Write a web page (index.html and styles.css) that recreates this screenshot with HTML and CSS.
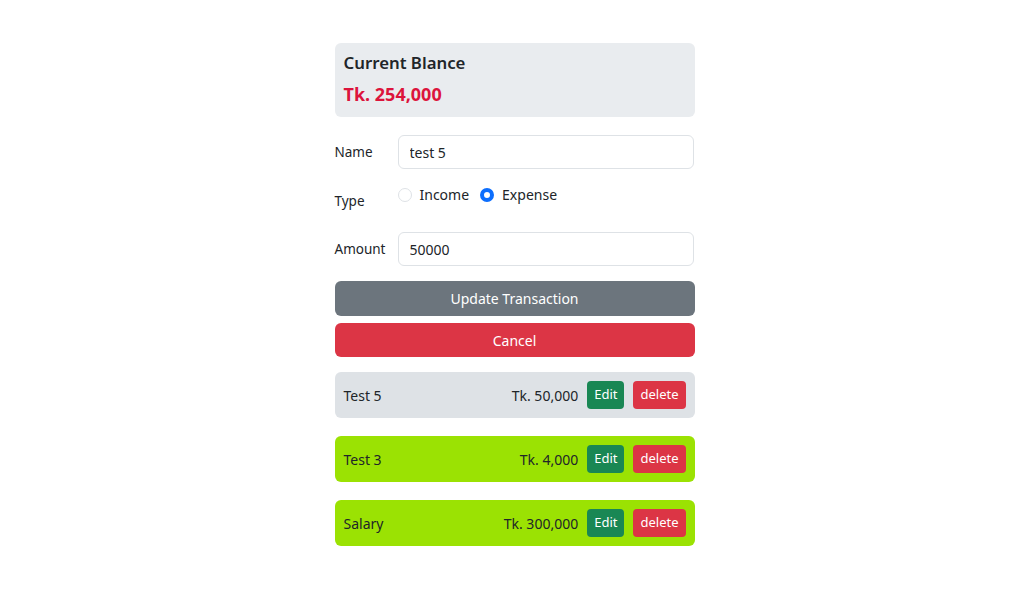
FILE: index.html
```html
<!DOCTYPE html>
<html>
<head>
<meta charset="utf-8">
<link rel="stylesheet" href="styles.css">
</head>
<body>
<main class="app">
  <section class="balance">
    <h2 class="balance-title">Current Blance</h2>
    <div class="balance-amount">Tk. 254,000</div>
  </section>

  <form class="form">
    <div class="row row-name">
      <label class="label">Name</label>
      <input class="input" type="text" value="test 5">
    </div>
    <div class="row row-type">
      <label class="label label-type">Type</label>
      <div class="radios">
        <label class="radio"><span class="radio-dot"></span>Income</label>
        <label class="radio"><span class="radio-dot checked"></span>Expense</label>
      </div>
    </div>
    <div class="row row-amount">
      <label class="label">Amount</label>
      <input class="input" type="text" value="50000">
    </div>
    <button type="button" class="btn btn-gray">Update Transaction</button>
    <button type="button" class="btn btn-red btn-cancel">Cancel</button>
  </form>

  <ul class="list">
    <li class="item item-gray">
      <span class="item-name">Test 5</span>
      <span class="item-amount">Tk. 50,000</span>
      <button type="button" class="sbtn sbtn-green">Edit</button>
      <button type="button" class="sbtn sbtn-red">delete</button>
    </li>
    <li class="item item-green">
      <span class="item-name">Test 3</span>
      <span class="item-amount">Tk. 4,000</span>
      <button type="button" class="sbtn sbtn-green">Edit</button>
      <button type="button" class="sbtn sbtn-red">delete</button>
    </li>
    <li class="item item-green">
      <span class="item-name">Salary</span>
      <span class="item-amount">Tk. 300,000</span>
      <button type="button" class="sbtn sbtn-green">Edit</button>
      <button type="button" class="sbtn sbtn-red">delete</button>
    </li>
  </ul>
</main>
</body>
</html>
```
FILE: styles.css
```css
* { box-sizing: border-box; }
html, body { margin: 0; padding: 0; background: #fff; }
body {
  font-family: "Noto Sans", "Open Sans", sans-serif;
  font-size: 14px;
  color: #212529;
  line-height: 1.5;
}
.app {
  width: 360px;
  margin: 43px auto 0 auto;
}
.balance {
  background: #e9ecef;
  border-radius: 6px;
  padding: 8px 9px 10px 9px;
  height: 74px;
}
.balance-title {
  margin: 0;
  font-size: 16.8px;
  font-weight: 600;
  line-height: 24px;
}
.balance-amount {
  margin-top: 7px;
  font-size: 18px;
  font-weight: 700;
  color: #dc143c;
  line-height: 24px;
}
.form { margin-top: 18px; display: flex; flex-direction: column; }
.row { display: flex; align-items: center; }
.label { width: 63px; flex: none; font-size: 13.5px; }
.input {
  flex: 1;
  height: 34px;
  border: 1px solid #dee2e6;
  border-radius: 6px;
  padding: 0 11px;
  font: inherit;
  font-size: 14px;
  color: #212529;
  margin-right: 1px;
}
.row-type { align-items: flex-start; margin-top: 14px; height: 49px; }
.label-type { padding-top: 8px; }
.radios { display: flex; gap: 11px; padding-top: 1px; }
.radio { display: flex; align-items: center; gap: 8px; font-size: 14px; }
.radio-dot {
  width: 14px; height: 14px; border-radius: 50%;
  border: 1px solid #dee2e6; background: #fff; display: inline-block;
}
.radio-dot.checked {
  border: 4px solid #0d6efd; background: #fff;
}
.row-amount { margin-top: 0; }
.btn {
  margin-top: 15px;
  height: 35px;
  border: none;
  border-radius: 6px;
  color: #fff;
  font: inherit;
  font-size: 14px;
}
.btn-gray { background: #6c757d; }
.btn-red { background: #dc3545; }
.btn-cancel { margin-top: 7px; height: 34px; }
.list { list-style: none; margin: 15px 0 0 0; padding: 0; display: flex; flex-direction: column; gap: 18px; }
.item {
  height: 46px;
  border-radius: 6px;
  display: flex;
  align-items: center;
  padding: 0 9px;
  font-size: 14px;
}
.item-gray { background: #dee2e6; }
.item-green { background: #9be203; }
.item-name { flex: 1; }
.item-amount { margin-right: 9px; }
.sbtn {
  height: 28px;
  border: none;
  border-radius: 4px;
  color: #fff;
  font: inherit;
  font-size: 13px;
  padding: 0 7px;
}
.sbtn-green { background: #198754; }
.sbtn-red { background: #dc3545; margin-left: 9px; }
```
